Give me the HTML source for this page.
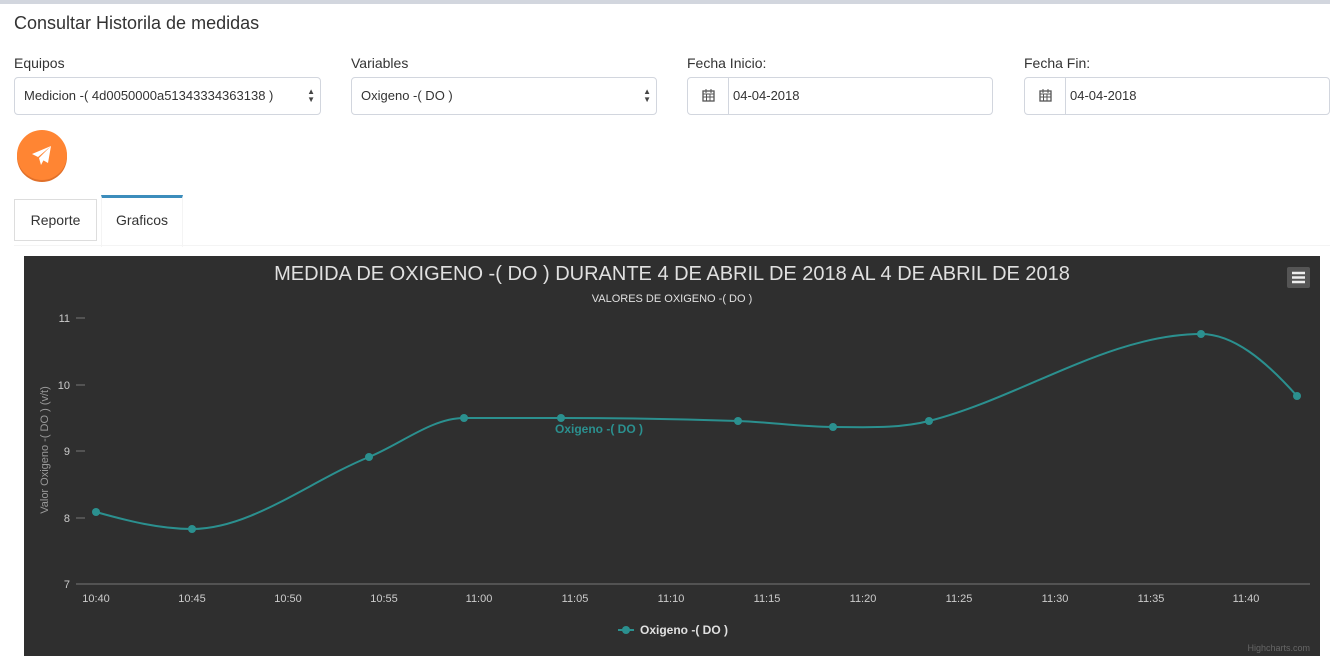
<!DOCTYPE html>
<html><head><meta charset="utf-8"><style>
*{box-sizing:border-box}
body{margin:0;width:1330px;height:668px;background:#fff;font-family:"Liberation Sans",sans-serif;color:#333;position:relative;overflow:hidden}
.topbar{position:absolute;left:0;top:0;width:1330px;height:4px;background:#d2d6de}
.t{position:absolute;font-size:14px;color:#333}
.sel{position:absolute;top:77px;height:38px;border:1px solid #d2d6de;border-radius:4px;font-size:13px;padding:0 9px;line-height:36px;color:#333}
.arr{position:absolute;right:5px;top:10px;font-size:8px;line-height:8px;color:#444}
.icon{position:absolute;left:0;top:0;width:41px;height:36px;border-right:1px solid #d2d6de}
</style></head><body>
<div class="topbar"></div>
<div class="t" style="left:14px;top:13px;font-size:18px">Consultar Historila de medidas</div>
<div class="t" style="left:14px;top:55px">Equipos</div>
<div class="t" style="left:351px;top:55px">Variables</div>
<div class="t" style="left:687px;top:55px">Fecha Inicio:</div>
<div class="t" style="left:1024px;top:55px">Fecha Fin:</div>
<div class="sel" style="left:14px;width:307px">Medicion -( 4d0050000a51343334363138 )<div class="arr">▲<br>▼</div></div>
<div class="sel" style="left:351px;width:306px">Oxigeno -( DO )<div class="arr">▲<br>▼</div></div>
<div class="sel" style="left:687px;width:306px;padding-left:45px"><div class="icon"><svg width="41" height="36"><rect x="15" y="13" width="11" height="10" fill="none" stroke="#555" stroke-width="1.3"/><path d="M15 16h11M18 11v4M23 11v4M15 19h11M18.5 16v7M22 16v7" stroke="#555" stroke-width="1"/></svg></div>04-04-2018</div>
<div class="sel" style="left:1024px;width:306px;padding-left:45px"><div class="icon"><svg width="41" height="36"><rect x="15" y="13" width="11" height="10" fill="none" stroke="#555" stroke-width="1.3"/><path d="M15 16h11M18 11v4M23 11v4M15 19h11M18.5 16v7M22 16v7" stroke="#555" stroke-width="1"/></svg></div>04-04-2018</div>
<div style="position:absolute;left:17px;top:130px;width:50px;height:50px;border-radius:50%;background:#ff8533;box-shadow:0 2px 0 #e0702a"></div>
<svg style="position:absolute;left:17px;top:130px" width="50" height="50"><path d="M34 16 L15 24 L21 27 Z M34 16 L22 28 L24 35 Z M34 16 L24 29 L31 33 Z" fill="#fff"/></svg>
<div style="position:absolute;left:14px;top:199px;width:83px;height:42px;border:1px solid #ddd;font-size:14px;text-align:center;line-height:40px">Reporte</div>
<div style="position:absolute;left:101px;top:195px;width:82px;height:52px;border-top:3px solid #3c8dbc;border-left:1px solid #f4f4f4;border-right:1px solid #f4f4f4;background:#fff;font-size:14px;text-align:center;line-height:44px">Graficos</div>
<div style="position:absolute;left:14px;top:245px;width:1316px;height:1px;background:#f4f4f4"></div>
<svg style="position:absolute;left:24px;top:256px" width="1296" height="400" viewBox="24 256 1296 400" font-family="Liberation Sans, sans-serif">
<rect x="24" y="256" width="1296" height="400" fill="#2f2f2f"/>
<text x="672" y="280" fill="#e0e0e0" font-size="20" text-anchor="middle">MEDIDA DE OXIGENO -( DO ) DURANTE 4 DE ABRIL DE 2018 AL 4 DE ABRIL DE 2018</text>
<text x="672" y="302" fill="#e0e0e0" font-size="11" text-anchor="middle">VALORES DE OXIGENO -( DO )</text>
<rect x="1287" y="267" width="23" height="21" rx="2" fill="#555"/>
<path d="M1292 273h13M1292 277.5h13M1292 282h13" stroke="#eee" stroke-width="2.5"/>
<g fill="#ccc" font-size="11" text-anchor="end">
<text x="70" y="322">11</text><text x="70" y="389">10</text><text x="70" y="455">9</text><text x="70" y="522">8</text><text x="70" y="588">7</text></g>
<g stroke="#777"><path d="M76 318h9M76 385h9M76 451h9M76 518h9"/><path d="M76 584H1310"/></g>
<text transform="translate(48,450) rotate(-90)" fill="#999" font-size="11" text-anchor="middle">Valor Oxigeno -( DO ) (v/t)</text>
<g fill="#ccc" font-size="11" text-anchor="middle">
<text x="96" y="602">10:40</text><text x="192" y="602">10:45</text><text x="288" y="602">10:50</text><text x="384" y="602">10:55</text><text x="479" y="602">11:00</text><text x="575" y="602">11:05</text><text x="671" y="602">11:10</text><text x="767" y="602">11:15</text><text x="863" y="602">11:20</text><text x="959" y="602">11:25</text><text x="1055" y="602">11:30</text><text x="1151" y="602">11:35</text><text x="1246" y="602">11:40</text></g>
<path d="M96 512 C128 521 160 529 192 529 C251 529 310 481 369 457 C401 444 432 418 464 418 L561 418 C620 418 679 419 738 421 C770 422 801 427 833 427 C865 427 897 429 929 421 C1020 398 1110 334 1201 334 C1233 334 1265 360 1297 396" fill="none" stroke="#2b908f" stroke-width="2"/>
<g fill="#2b908f"><circle cx="96" cy="512" r="4"/><circle cx="192" cy="529" r="4"/><circle cx="369" cy="457" r="4"/><circle cx="464" cy="418" r="4"/><circle cx="561" cy="418" r="4"/><circle cx="738" cy="421" r="4"/><circle cx="833" cy="427" r="4"/><circle cx="929" cy="421" r="4"/><circle cx="1201" cy="334" r="4"/><circle cx="1297" cy="396" r="4"/></g>
<text x="599" y="433" fill="#2b908f" font-size="12" font-weight="bold" text-anchor="middle">Oxigeno -( DO )</text>
<path d="M618 630h16" stroke="#2b908f" stroke-width="2"/><circle cx="626" cy="630" r="4" fill="#2b908f"/>
<text x="640" y="634" fill="#e0e0e0" font-size="12" font-weight="bold">Oxigeno -( DO )</text>
<text x="1310" y="651" fill="#666" font-size="9" text-anchor="end">Highcharts.com</text>
</svg>
</body></html>
